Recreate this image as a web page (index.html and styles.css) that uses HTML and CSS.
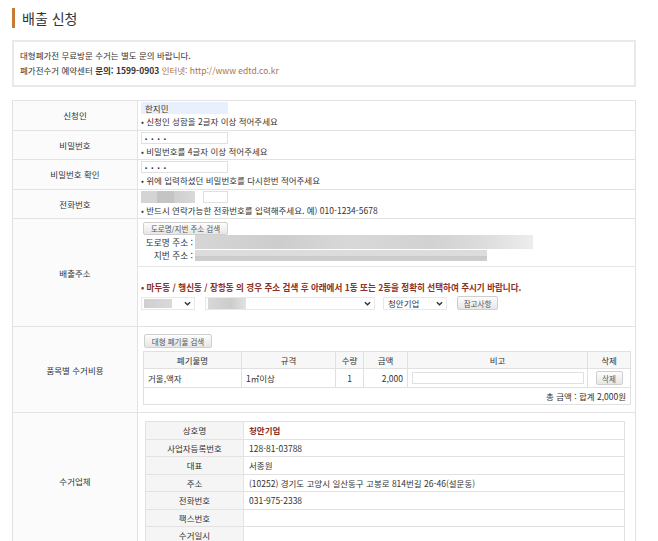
FILE: index.html
```html
<!DOCTYPE html>
<html lang="ko">
<head>
<meta charset="utf-8">
<title>배출 신청</title>
<link rel="stylesheet" href="styles.css">
</head>
<body>
<div class="page">
  <h1 class="title">배출 신청</h1>
  <div class="notice">
    <p>대형폐가전 무료방문 수거는 별도 문의 바랍니다.</p>
    <p>폐가전수거 예약센터 <b>문의: 1599-0903</b> <span class="link">인터넷: http://www edtd.co.kr</span></p>
  </div>
  <table class="form">
    <colgroup><col class="c-label"><col></colgroup>
    <tr class="r-small">
      <th>신청인</th>
      <td><div class="field autofill">한지민</div><div class="help">• 신청인 성함을 2글자 이상 적어주세요</div></td>
    </tr>
    <tr class="r-small">
      <th>비밀번호</th>
      <td><div class="field dots">••••</div><div class="help">• 비밀번호를 4글자 이상 적어주세요</div></td>
    </tr>
    <tr class="r-small">
      <th>비밀번호 확인</th>
      <td><div class="field dots">••••</div><div class="help">• 위에 입력하셨던 비밀번호를 다시한번 적어주세요</div></td>
    </tr>
    <tr class="r-small">
      <th>전화번호</th>
      <td><div class="phone"><span class="blur blur-phone"></span><span class="field field-sm"></span></div><div class="help">• 반드시 연락가능한 전화번호를 입력해주세요. 예) 010-1234-5678</div></td>
    </tr>
    <tr>
      <th>배출주소</th>
      <td class="addr">
        <div class="addr-top">
          <button class="btn btn-addr">도로명/지번 주소 검색</button>
          <div class="addr-line"><span class="addr-label">도로명 주소 :</span><span class="blur blur-road"></span></div>
          <div class="addr-line"><span class="addr-label">지번 주소 :</span><span class="blur blur-jibun"></span></div>
        </div>
        <div class="addr-bottom">
          <p class="warn">• 마두동 / 행신동 / 장항동 의 경우 주소 검색 후 아래에서 1동 또는 2동을 정확히 선택하여 주시기 바랍니다.</p>
          <div class="selects">
            <span class="select s1"><span class="blur blur-s1"></span><svg class="chev" viewBox="0 0 8 5"><polyline points="1,1 4,4 7,1"/></svg></span>
            <span class="select s2"><span class="blur blur-s2"></span><svg class="chev" viewBox="0 0 8 5"><polyline points="1,1 4,4 7,1"/></svg></span>
            <span class="select s3"><span class="sel-text">청안기업</span><svg class="chev" viewBox="0 0 8 5"><polyline points="1,1 4,4 7,1"/></svg></span>
            <button class="btn btn-note">참고사항</button>
          </div>
        </div>
      </td>
    </tr>
    <tr>
      <th>품목별 수거비용</th>
      <td class="items">
        <button class="btn btn-search">대형 폐기물 검색</button>
        <table class="grid">
          <colgroup><col class="g1"><col class="g2"><col class="g3"><col class="g4"><col class="g5"><col class="g6"></colgroup>
          <tr class="g-head"><th>폐기물명</th><th>규격</th><th>수량</th><th>금액</th><th>비고</th><th>삭제</th></tr>
          <tr class="g-row">
            <td>거울,액자</td><td>1㎡이상</td><td class="center">1</td><td class="right">2,000</td>
            <td><div class="field field-note"></div></td>
            <td class="center"><button class="btn btn-del">삭제</button></td>
          </tr>
          <tr class="g-total"><td colspan="6">총 금액 : 합계 2,000원</td></tr>
        </table>
      </td>
    </tr>
    <tr>
      <th>수거업체</th>
      <td class="company">
        <table class="info">
          <colgroup><col class="i1"><col></colgroup>
          <tr><th>상호명</th><td class="name">청안기업</td></tr>
          <tr><th>사업자등록번호</th><td>128-81-03788</td></tr>
          <tr><th>대표</th><td>서종원</td></tr>
          <tr><th>주소</th><td>(10252) 경기도 고양시 일산동구 고봉로 814번길 26-46(설문동)</td></tr>
          <tr><th>전화번호</th><td>031-975-2338</td></tr>
          <tr><th>팩스번호</th><td></td></tr>
          <tr><th>수거일시</th><td></td></tr>
        </table>
      </td>
    </tr>
  </table>
</div>
</body>
</html>
```
FILE: styles.css
```css
* { box-sizing: border-box; }
body {
  margin: 0;
  background: #fff;
  color: #333;
  font-family: "Noto Sans CJK KR", "Noto Sans", sans-serif;
  font-size: 8.5px;
}
p { margin: 0; }
.page { width: 636px; padding: 8px 0 0 12px; }
.title {
  margin: 0 0 12px;
  height: 20px;
  line-height: 20px;
  border-left: 3px solid #c87a34;
  padding-left: 7px;
  font-size: 14px;
  font-weight: normal;
  color: #333;
}
.notice {
  border: 2px solid #e9e9e9;
  padding: 6px 6px 7px;
  line-height: 15px;
  margin-bottom: 13px;
  font-size: 8.5px;
}
.notice b { font-weight: bold; color: #333; }
.notice .link { color: #b0703f; }

.form {
  width: 624px;
  border-collapse: collapse;
  table-layout: fixed;
  border: 1px solid #e2e2e2;
}
.c-label { width: 125px; }
.form > tbody > tr > th {
  background: #fbfbfb;
  font-weight: normal;
  border: 1px solid #e2e2e2;
  text-align: center;
  vertical-align: middle;
}
.form > tbody > tr > td {
  border: 1px solid #e2e2e2;
  padding: 1px 3px 1px 3px;
  vertical-align: top;
}
.field {
  display: block;
  height: 12px;
  width: 87px;
  border: 1px solid #e0e0e0;
  background: #fff;
  line-height: 10px;
  padding: 0 3px;
  font-size: 8.5px;
}
.autofill { background: #e8f0fe; border-color: #e8f0fe; }
.dots { letter-spacing: 4px; font-size: 6.5px; line-height: 10px; color: #333; padding-left: 3px; }
.help { line-height: 14.5px; height: 14.5px; }
.phone { display: flex; height: 12px; gap: 8px; }
.field-sm { width: 25px; }
.blur { display: block; }
.blur-phone {
  width: 54px; height: 12px;
  background: linear-gradient(90deg, #d4d4d4 0, #d4d4d4 30%, #c4c4c4 30%, #c4c4c4 62%, #cfcfcf 62%, #d9d9d9 100%);
}

.addr { padding: 0 !important; }
.addr-top { padding: 3px 3px 4px; border-bottom: 1px solid #e5e5e5; }
.btn {
  font-family: "Noto Sans CJK KR", "Noto Sans", sans-serif;
  font-size: 7.5px;
  color: #555;
  background: linear-gradient(#fdfdfd, #e6e6e6);
  border: 1px solid #cfcfcf;
  border-radius: 2px;
  padding: 0 5px;
  height: 13px;
  line-height: 11px;
  display: block;
}
.btn-addr { margin-left: 2px; width: 85px; }
.addr-line { display: flex; align-items: center; height: 14px; }
.addr-line + .addr-line { height: 13px; }
.addr-label { width: 52px; text-align: right; margin-right: 2px; font-size: 8.7px; }
.blur-road {
  width: 338px; height: 14px;
  background: linear-gradient(90deg, #d6d6d6 0, #cdcdcd 25%, #d8d8d8 45%, #d2d2d2 70%, #dcdcdc 85%, #ededed 100%);
}
.blur-jibun {
  width: 292px; height: 11px;
  background: linear-gradient(#dcdcdc 0, #dcdcdc 55%, #c9c9c9 55%, #cfcfcf 100%);
}
.addr-bottom { padding: 14px 3px 16px; }
.warn { color: #8e2e22; font-weight: bold; line-height: 13px; font-size: 8.55px; }
.selects { display: flex; align-items: center; margin-top: 2px; height: 14px; }
.select {
  display: flex; align-items: center; justify-content: space-between;
  height: 13px;
  border: 1px solid #e8e8e8;
  background: #fff;
  padding: 0 3px 0 2px;
}
.s1 { width: 54px; }
.s2 { width: 170px; margin-left: 10px; }
.s3 { width: 64px; margin-left: 8px; padding-left: 4px; }
.sel-text { font-size: 8.5px; }
.blur-s1 { width: 28px; height: 9px; background: linear-gradient(90deg, #cfcfcf, #d9d9d9); }
.blur-s2 { width: 38px; height: 11px; background: linear-gradient(90deg, #d8d8d8, #cccccc 60%, #e2e2e2); }
.chev { width: 7px; height: 5px; }
.chev polyline { fill: none; stroke: #333; stroke-width: 1.6; }
.btn-note { margin-left: 10px; width: 41px; height: 14px; padding: 0; }

.items { padding: 7px 5px 7px 5px !important; }
.btn-search { margin-left: 1px; width: 68px; height: 14px; padding: 0; }
.grid {
  margin-top: 3px;
  width: 487px;
  border-collapse: collapse;
  table-layout: fixed;
  border: 1px solid #e0e0e0;
}
.g1 { width: 98px; } .g2 { width: 94px; } .g3 { width: 28px; }
.g4 { width: 44px; } .g5 { width: 180px; } .g6 { width: 43px; }
.grid th, .grid td { border: 1px solid #e0e0e0; padding: 0 4px; }
.g-head th { background: #f7f7f7; font-weight: normal; height: 17px; text-align: center; }
.g-row td { height: 19px; }
.grid .center { text-align: center; }
.grid .right { text-align: right; }
.field-note { width: 172px; margin: 0; }
.btn-del { margin: 0 auto; width: 27px; height: 14px; padding: 0; }
.g-total td { height: 17px; text-align: right; padding-right: 4px; }

.company { padding: 8px 10px 5px 7px !important; }
.info {
  width: 480px;
  border-collapse: collapse;
  table-layout: fixed;
  border: 1px solid #e2e2e2;
}
.i1 { width: 98px; }
.info th, .info td { border: 1px solid #e2e2e2; height: 17.5px; padding: 0 5px; line-height: 12px; }
.info th { background: #f5f5f5; font-weight: normal; text-align: center; }
.info .name { color: #8e2e22; font-weight: bold; }
```
